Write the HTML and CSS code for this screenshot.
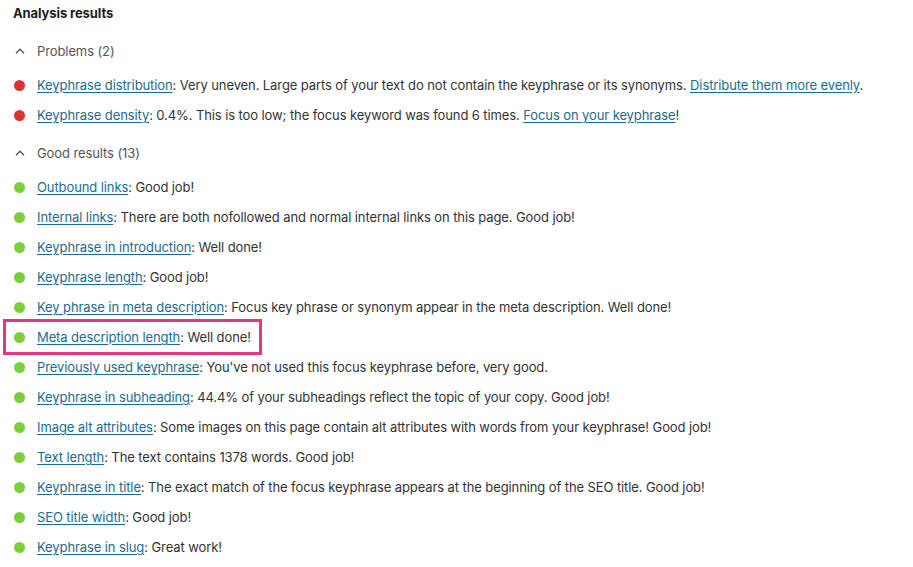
FILE: index.html
```html
<!DOCTYPE html>
<html>
<head>
<meta charset="utf-8">
<link rel="stylesheet" href="styles.css">
</head>
<body>
<div class="panel">
  <h2 class="title">Analysis results</h2>

  <section class="group">
    <div class="group-head">
      <svg class="chev" width="10" height="6" viewBox="0 0 10 6"><path d="M1 5.2 L5 1.2 L9 5.2" fill="none" stroke="#555" stroke-width="1.4"/></svg>
      <span>Problems (2)</span>
    </div>
    <ul class="results">
      <li><span class="dot bad"></span><span class="txt"><a href="#">Keyphrase distribution</a>: Very uneven. Large parts of your text do not contain the keyphrase or its synonyms. <a href="#">Distribute them more evenly</a>.</span></li>
      <li><span class="dot bad"></span><span class="txt"><a href="#">Keyphrase density</a>: 0.4%. This is too low; the focus keyword was found 6 times. <a href="#">Focus on your keyphrase</a>!</span></li>
    </ul>
  </section>

  <section class="group second">
    <div class="group-head">
      <svg class="chev" width="10" height="6" viewBox="0 0 10 6"><path d="M1 5.2 L5 1.2 L9 5.2" fill="none" stroke="#555" stroke-width="1.4"/></svg>
      <span>Good results (13)</span>
    </div>
    <ul class="results">
      <li><span class="dot good"></span><span class="txt"><a href="#">Outbound links</a>: Good job!</span></li>
      <li><span class="dot good"></span><span class="txt"><a href="#">Internal links</a>: There are both nofollowed and normal internal links on this page. Good job!</span></li>
      <li><span class="dot good"></span><span class="txt"><a href="#">Keyphrase in introduction</a>: Well done!</span></li>
      <li><span class="dot good"></span><span class="txt"><a href="#">Keyphrase length</a>: Good job!</span></li>
      <li><span class="dot good"></span><span class="txt"><a href="#">Key phrase in meta description</a>: Focus key phrase or synonym appear in the meta description. Well done!</span></li>
      <li class="hl"><span class="dot good"></span><span class="txt"><a href="#">Meta description length</a>: Well done!</span></li>
      <li><span class="dot good"></span><span class="txt"><a href="#">Previously used keyphrase</a>: You've not used this focus keyphrase before, very good.</span></li>
      <li><span class="dot good"></span><span class="txt"><a href="#">Keyphrase in subheading</a>: 44.4% of your subheadings reflect the topic of your copy. Good job!</span></li>
      <li><span class="dot good"></span><span class="txt"><a href="#">Image alt attributes</a>: Some images on this page contain alt attributes with words from your keyphrase! Good job!</span></li>
      <li><span class="dot good"></span><span class="txt"><a href="#">Text length</a>: The text contains 1378 words. Good job!</span></li>
      <li><span class="dot good"></span><span class="txt"><a href="#">Keyphrase in title</a>: The exact match of the focus keyphrase appears at the beginning of the SEO title. Good job!</span></li>
      <li><span class="dot good"></span><span class="txt"><a href="#">SEO title width</a>: Good job!</span></li>
      <li><span class="dot good"></span><span class="txt"><a href="#">Keyphrase in slug</a>: Great work!</span></li>
    </ul>
  </section>
</div>
</body>
</html>
```

FILE: styles.css
```css
html, body {
  margin: 0;
  padding: 0;
  background: #fff;
}
body {
  font-family: Inter, "Liberation Sans", sans-serif;
  font-size: 13px;
  letter-spacing: -0.1px;
  color: #333;
}
.panel {
  padding-left: 13px;
}
.title {
  margin: 0;
  font-size: 13px;
  font-weight: 700;
  line-height: 26px;
  color: #1e1e1e;
}
.group {
  margin-top: 10px;
}
.group.second {
  margin-top: 8px;
}
.group-head {
  display: flex;
  align-items: center;
  height: 30px;
  color: #555;
}
.chev {
  margin-left: 2px;
  margin-right: 12px;
}
.results {
  list-style: none;
  margin: 4px 0 0;
  padding: 0;
}
.results li {
  display: flex;
  align-items: center;
  height: 30px;
  white-space: nowrap;
}
.dot {
  width: 11px;
  height: 11px;
  border-radius: 50%;
  margin-left: 1px;
  margin-right: 12px;
  flex: none;
}
.dot.bad { background: #dc3232; }
.dot.good { background: #7ad03a; }
.txt a {
  color: #1a6c91;
  text-decoration: underline;
  text-underline-offset: 2px;
}
.results li.hl {
  width: fit-content;
  margin-left: -7px;
  padding-left: 7px;
  padding-right: 8px;
  outline: 3px solid #e2397c;
}
```
